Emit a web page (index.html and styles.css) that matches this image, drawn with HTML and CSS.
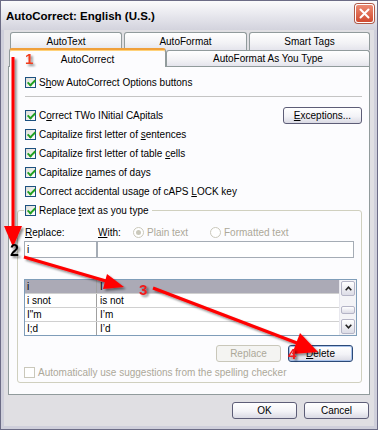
FILE: index.html
```html
<!DOCTYPE html>
<html>
<head>
	<title>AutoCorrect: English (U.S.)</title>
	<link rel="stylesheet" href="styles.css">
</head>
<body>
	<div class="window">
		<div class="titlebar">
			<span class="title">AutoCorrect: English (U.S.)</span>
			<span class="close">
				<svg width="11" height="11" viewBox="0 0 11 11"><path d="M1.5 1.5 L9.5 9.5 M9.5 1.5 L1.5 9.5" stroke="#fff" stroke-width="2" stroke-linecap="round"/></svg>
			</span>
		</div>
		<div class="client">
			<div class="tabrow back">
				<div class="tab t1">AutoText</div>
				<div class="tab t2">AutoFormat</div>
				<div class="tab t3">Smart Tags</div>
			</div>
			<div class="tabrow front">
				<div class="tab active">AutoCorrect</div>
				<div class="tab t4">AutoFormat As You Type</div>
			</div>
			<div class="panel">
				<div class="row"><span class="check on"></span><span>S<u>h</u>ow AutoCorrect Options buttons</span></div>
				<div class="sep"></div>
				<div class="options">
					<div class="optlist">
						<div class="row"><span class="check on"></span><span>C<u>o</u>rrect TWo INitial CApitals</span></div>
						<div class="row"><span class="check on"></span><span>Capitalize first letter of <u>s</u>entences</span></div>
						<div class="row"><span class="check on"></span><span>Capitalize first letter of table <u>c</u>ells</span></div>
						<div class="row"><span class="check on"></span><span>Capitalize <u>n</u>ames of days</span></div>
						<div class="row"><span class="check on"></span><span>Correct accidental usage of cAPS <u>L</u>OCK key</span></div>
					</div>
					<button class="btn exc"><u>E</u>xceptions...</button>
				</div>
				<fieldset class="group">
					<legend class="row"><span class="check on"></span><span>Replace <u>t</u>ext as you type</span></legend>
					<div class="labels">
						<span class="lab"><u>R</u>eplace:</span>
						<span class="lab"><u>W</u>ith:</span>
						<span class="opt"><span class="radio on"></span><span>Plain text</span></span>
						<span class="opt"><span class="radio"></span><span>Formatted text</span></span>
					</div>
					<div class="inputs">
						<div class="field rep">i</div>
						<div class="field with"></div>
					</div>
					<div class="list">
						<div class="entries">
							<div class="entry sel"><span>i</span><span>I</span></div>
							<div class="entry"><span>i snot</span><span>is not</span></div>
							<div class="entry"><span>I"m</span><span>I’m</span></div>
							<div class="entry"><span>I;d</span><span>I’d</span></div>
						</div>
						<div class="scroll">
							<div class="sbtn"><svg width="7" height="5" viewBox="0 0 7 5"><path d="M0.7 4.2 L3.5 1.2 L6.3 4.2" fill="none" stroke="#222" stroke-width="1.6"/></svg></div>
							<div class="sbtn thumb"></div>
							<div class="sbtn"><svg width="7" height="5" viewBox="0 0 7 5"><path d="M0.7 0.8 L3.5 3.8 L6.3 0.8" fill="none" stroke="#222" stroke-width="1.6"/></svg></div>
						</div>
					</div>
					<div class="actions">
						<button class="btn" disabled>Replace</button>
						<button class="btn def"><u>D</u>elete</button>
					</div>
					<div class="row dis auto"><span class="check off"></span><span>Automatically use suggestions from the spelling checker</span></div>
				</fieldset>
			</div>
			<div class="footer">
				<button class="btn">OK</button>
				<button class="btn">Cancel</button>
			</div>
		</div>
		<svg class="marks" width="378" height="430" viewBox="0 0 378 430">
			<defs>
				<filter id="sh" x="-20%" y="-20%" width="140%" height="140%">
					<feDropShadow dx="2" dy="2" stdDeviation="1.2" flood-color="#000" flood-opacity="0.45"/>
				</filter>
			</defs>
			<g fill="#f00" stroke="#f00" filter="url(#sh)">
				<line x1="13" y1="57" x2="13" y2="230" stroke-width="3"/>
				<polygon points="4,226 22,226 13,247" stroke="none"/>
				<line x1="24" y1="257" x2="106" y2="281" stroke-width="3"/>
				<polygon points="107,274 103,289 124,287" stroke="none"/>
				<line x1="153" y1="288" x2="297" y2="343" stroke-width="3"/>
				<polygon points="300,333 292,354 318,352" stroke="none"/>
			</g>
			<g filter="url(#sh)">
				<text x="25" y="64" class="num n1">1</text>
				<text x="10" y="256" class="num n2">2</text>
				<text x="139" y="295" class="num n3">3</text>
				<text x="288" y="359" class="num n3">4</text>
			</g>
		</svg>
	</div>
</body>
</html>
```

FILE: styles.css
```css
*{
	margin: 0px;
	padding: 0px;
	box-sizing: border-box;
}
body{
	font-family: "Liberation Sans", Arial, sans-serif;
	font-size: 10px;
	color: #000;
	background-color: #e0dfe3;
}
u{
	text-decoration: underline;
}
.window{
	position: relative;
	width: 378px;
	height: 430px;
	border: 1px solid #6c6c86;
	display: flex;
	flex-direction: column;
	background-color: #e0dfe3;
}
.titlebar{
	height: 29px;
	display: flex;
	justify-content: space-between;
	align-items: center;
	padding-left: 5px;
	background: linear-gradient(#fbfbfc, #e9e9ef 45%, #d3d3dd);
}
.title{
	font-weight: bold;
	font-size: 11.5px;
}
.close{
	width: 19px;
	height: 19px;
	align-self: flex-start;
	margin: 3px 3px 0 0;
	border: 1px solid #fff;
	border-radius: 3px;
	background: linear-gradient(#ec8c74, #d04a30);
	box-shadow: 0 0 0 1px #b05a48;
	display: flex;
	align-items: center;
	justify-content: center;
}
.client{
	flex: 1;
	border: 3px solid #cfcfdb;
	border-top: 0;
	padding: 2px 4px 0 4px;
	display: flex;
	flex-direction: column;
}
.tabrow{
	display: flex;
}
.back{
	height: 18px;
	margin-left: 2px;
	gap: 2px;
}
.front{
	height: 18px;
	margin-top: -2px;
	align-items: flex-end;
	position: relative;
	z-index: 2;
}
.tab{
	height: 18px;
	border: 1px solid #919b9c;
	border-bottom: none;
	border-radius: 3px 3px 0 0;
	background: linear-gradient(#ffffff, #f2f2f5 60%, #e4e4ec);
	display: flex;
	align-items: center;
	justify-content: center;
}
.t1{ width: 112px; }
.t2{ width: 123px; }
.t3{ width: 121px; }
.t4{
	width: 204px;
	height: 16px;
}
.active{
	width: 157px;
	height: 19px;
	margin-left: 1px;
	margin-bottom: -1px;
	background: #fcfcfe;
	border-top: 2px solid #f0a03a;
	box-shadow: inset 0 1px 0 #ffd27a;
	padding-top: 1px;
}
.panel{
	height: 329px;
	border: 1px solid #919b9c;
	background-color: #fcfcfe;
	padding: 6px 7px 0 16px;
	position: relative;
	z-index: 1;
}
.row{
	display: flex;
	align-items: center;
	height: 19px;
	white-space: nowrap;
}
.check{
	flex: none;
	position: relative;
	width: 11px;
	height: 11px;
	margin-right: 3px;
	border: 1px solid #1c5180;
	background: linear-gradient(135deg, #dcdcd7, #ffffff);
}
.check.on::after{
	content: "";
	position: absolute;
	left: 3px;
	top: 0px;
	width: 3px;
	height: 6px;
	border: solid #21a121;
	border-width: 0 2px 2px 0;
	transform: rotate(45deg);
}
.check.off{
	border-color: #cac8bb;
	background: #ffffff;
}
.sep{
	height: 1px;
	background-color: #c4c4c4;
	margin: 4px 0 9px 0;
}
.options{
	display: flex;
	justify-content: space-between;
	align-items: flex-start;
}
.btn{
	font-family: inherit;
	font-size: 10px;
	height: 17px;
	width: 65px;
	border: 1px solid #5d5d77;
	border-radius: 3px;
	background: linear-gradient(#ffffff, #f3f3f7 55%, #dadae4);
	color: #000;
}
.exc{
	width: 79px;
	margin-top: 1px;
}
.def{
	border-color: #2c4a78;
	box-shadow: inset 0 0 0 1px #a9c2ea;
}
.btn:disabled{
	border-color: #c9c7ba;
	color: #aca899;
	background: #f4f4f2;
}
.group{
	margin-left: -8px;
	border: 1px solid #d0d0bf;
	border-radius: 3px;
	padding: 0 4px 2px 6px;
}
.group legend{
	padding: 0 3px 0 1px;
}
.labels{
	display: grid;
	grid-template-columns: 73px 36px 77px auto;
	align-items: center;
	height: 16px;
	margin-top: 4px;
}
.lab{
	padding-left: 1px;
}
.opt{
	display: flex;
	align-items: center;
	color: #aca899;
}
.radio{
	width: 11px;
	height: 11px;
	margin-right: 3px;
	border: 1px solid #cac8bb;
	border-radius: 50%;
	background: #ffffff;
	display: flex;
	align-items: center;
	justify-content: center;
}
.radio.on::after{
	content: "";
	width: 5px;
	height: 5px;
	border-radius: 50%;
	background-color: #cac8bb;
}
.inputs{
	display: flex;
	margin-top: 1px;
}
.field{
	height: 17px;
	border: 1px solid #a5acb5;
	background-color: #ffffff;
	padding-left: 2px;
	line-height: 15px;
}
.rep{ width: 73px; }
.with{ width: 257px; }
.list{
	display: flex;
	height: 57px;
	margin-top: 21px;
	border: 1px solid #7f9db9;
	background-color: #ffffff;
}
.entries{
	flex: 1;
}
.entry{
	display: grid;
	grid-template-columns: 72px 1fr;
	height: 14px;
	line-height: 13px;
	border-bottom: 1px solid #d0d0d0;
}
.entry:last-child{
	height: 13px;
	border-bottom: none;
}
.entry span{
	padding-left: 2px;
}
.entry span:first-child{
	border-right: 1px solid #a0a0a0;
}
.entry span:last-child{
	padding-left: 3px;
}
.sel{
	background-color: #abaab6;
}
.scroll{
	width: 17px;
	display: flex;
	flex-direction: column;
	justify-content: space-between;
	padding: 1px 1px;
	background-color: #f4f4f7;
	border-left: 1px solid #e8e8ee;
}
.sbtn{
	height: 15px;
	border: 1px solid #b4b4c6;
	border-radius: 2px;
	background: linear-gradient(#ffffff, #dcdce6);
	display: flex;
	align-items: center;
	justify-content: center;
}
.thumb{
	height: 8px;
	margin-top: 4px;
}
.actions{
	display: flex;
	justify-content: flex-end;
	gap: 7px;
	margin: 9px 4px 0 0;
}
.dis{
	color: #aca899;
}
.auto{
	height: 16px;
	margin-top: 2px;
}
.footer{
	display: flex;
	justify-content: flex-end;
	gap: 7px;
	margin-top: 7px;
	padding-right: 1px;
}
.marks{
	position: absolute;
	left: -1px;
	top: -1px;
	z-index: 5;
	pointer-events: none;
}
.num{
	font-family: "Liberation Sans", Arial, sans-serif;
	font-weight: bold;
	font-size: 15px;
}
.n1{ fill: #f03c1e; }
.n2{ fill: #000000; font-size: 16px; }
.n3{ fill: #f01a1a; }
```
